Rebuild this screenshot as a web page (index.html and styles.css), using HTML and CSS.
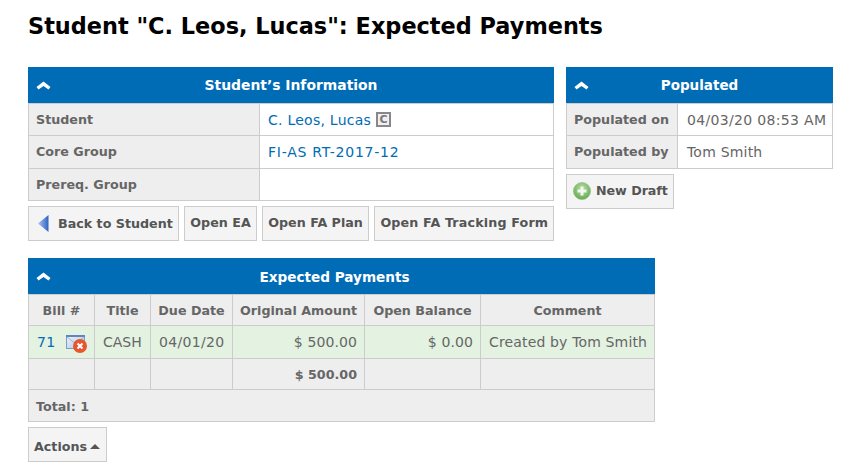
FILE: index.html
```html
<!DOCTYPE html>
<html lang="en">
<head>
<meta charset="utf-8">
<title>Expected Payments</title>
<link rel="stylesheet" href="styles.css">
</head>
<body>
<h1 class="title">Student "C. Leos, Lucas": Expected Payments</h1>
<div class="top">
  <section class="col-left">
    <div class="bar"><svg class="chev" viewBox="0 0 14 9"><path d="M7 .5 14 6l-2 2.5-5-3.600-5 3.600L0 6z"/></svg><span>Student’s Information</span></div>
    <table class="info">
      <tr><th>Student</th><td><div class="student"><a class="name" href="#">C. Leos, Lucas</a><span class="cbadge">C</span></div></td></tr>
      <tr class="mid"><th>Core Group</th><td><a class="code" href="#">FI-AS RT-2017-12</a></td></tr>
      <tr><th>Prereq. Group</th><td></td></tr>
    </table>
    <div class="btns">
      <a class="btn btn-back" href="#"><svg class="ico-back" viewBox="0 0 11 17"><defs><linearGradient id="gb" x1="0" x2="1" y1="0" y2="0"><stop offset="0" stop-color="#a9c6ee"/><stop offset="1" stop-color="#2f62c4"/></linearGradient></defs><path d="M10.500 0v17L0 8.500z" fill="url(#gb)"/></svg>Back to Student</a>
      <a class="btn" href="#">Open EA</a>
      <a class="btn" href="#">Open FA Plan</a>
      <a class="btn btn-wide" href="#">Open FA Tracking Form</a>
    </div>
  </section>
  <section class="col-right">
    <div class="bar bar-small"><svg class="chev" viewBox="0 0 14 9"><path d="M7 .5 14 6l-2 2.5-5-3.600-5 3.600L0 6z"/></svg><span>Populated</span></div>
    <table class="info">
      <tr><th>Populated on</th><td class="plain digits">04/03/20 08:53 AM</td></tr>
      <tr class="mid"><th>Populated by</th><td class="plain person">Tom Smith</td></tr>
    </table>
    <div class="btns">
      <a class="btn btn-new" href="#"><svg class="ico-new" viewBox="0 0 18 18"><defs><radialGradient id="gn" cx=".5" cy=".35" r=".7"><stop offset="0" stop-color="#b6dfa6"/><stop offset="1" stop-color="#5da54c"/></radialGradient></defs><circle cx="9" cy="9" r="8.600" fill="url(#gn)" stroke="#8cc07e" stroke-width=".6"/><path d="M7.500 4.500h3v3h3v3h-3v3h-3v-3h-3v-3h3z" fill="#f2f8ef"/></svg>New Draft</a>
    </div>
  </section>
</div>
<section class="payments">
  <div class="bar bar-offset"><svg class="chev" viewBox="0 0 14 9"><path d="M7 .5 14 6l-2 2.500-5-3.600-5 3.600L0 6z"/></svg><span>Expected Payments</span></div>
  <table class="grid">
    <thead>
      <tr><th class="c1">Bill #</th><th class="c2">Title</th><th class="c3">Due Date</th><th class="c4">Original Amount</th><th class="c5">Open Balance</th><th class="c6">Comment</th></tr>
    </thead>
    <tbody>
      <tr class="row-ok">
        <td><div class="bill"><a class="digits" href="#">71</a><svg class="ico-mail" viewBox="0 0 21 18"><defs><linearGradient id="gm" x1="0" x2="1" y1="0" y2="1"><stop offset="0" stop-color="#eef4fc"/><stop offset="1" stop-color="#a9c3e6"/></linearGradient></defs><rect x=".5" y=".5" width="18" height="13" fill="url(#gm)" stroke="#7f9cc4"/><rect x="0" y="0" width="19" height="2" fill="#5f86b8"/><path d="M1 2l8.500 6.500L18 2" fill="none" stroke="#9db5d8"/><circle cx="14" cy="11" r="7" fill="#e8562e"/><path d="M11.500 8.500l5 5m0-5-5 5" stroke="#fff" stroke-width="2"/></svg></div></td>
        <td>CASH</td><td class="digits">04/01/20</td><td class="num amount">$ 500.00</td><td class="num amount">$ 0.00</td><td class="comment">Created by Tom Smith</td>
      </tr>
      <tr class="row-sum"><td></td><td></td><td></td><th class="num">$ 500.00</th><td></td><td></td></tr>
    </tbody>
    <tfoot>
      <tr><th colspan="6" class="total">Total: 1</th></tr>
    </tfoot>
  </table>
  <div class="btns">
    <a class="btn btn-actions" href="#">Actions<span class="caret"></span></a>
  </div>
</section>
</body>
</html>
```
FILE: styles.css
```css
* { box-sizing: border-box; }
html, body { margin: 0; background: #fff; }
body {
  padding: 12px 16px 0 28px;
  font-family: "DejaVu Sans", Verdana, sans-serif;
  font-size: 12.7px;
  color: #666;
}
a { color: #006cb5; text-decoration: none; }
.title {
  margin: 0 0 26px;
  font-size: 22.4px;
  line-height: 29px;
  font-weight: 700;
  color: #000;
}
.top { display: flex; gap: 12px; align-items: flex-start; }
.col-left { width: 526px; }
.col-right { width: 267px; }
.payments { width: 627px; margin-top: 17px; }
.bar {
  position: relative;
  height: 36px;
  background: #006cb5;
  color: #fff;
  font-weight: 700;
  font-size: 13.9px;
  display: flex;
  align-items: center;
  justify-content: center;
}
.bar-small { font-size: 13.5px; }
.bar-offset { padding: 1px 14px 0 0; font-size: 13.6px; }
.chev { position: absolute; left: 8px; top: 14px; width: 15px; height: 9px; fill: #fff; }
table { border-collapse: collapse; width: 100%; }
.info { table-layout: fixed; }
.info th, .info td { border: 1px solid #ccc; height: 32px; padding: 0 7px; text-align: left; white-space: nowrap; }
.info .mid th, .info .mid td { height: 33px; }
.info .mid th { padding-bottom: 2px; }
.info th { background: #eee; font-weight: 700; }
.col-left .info th { width: 231px; }
.col-right .info th { width: 111px; }
.info td { background: #fff; font-size: 14px; padding-left: 8px; }
.info td.plain { padding-left: 9px; }
.student { display: flex; align-items: center; }
.name { letter-spacing: .25px; }
.code { letter-spacing: .75px; }
.digits { letter-spacing: .33px; }
.amount { letter-spacing: .1px; }
.person { letter-spacing: .2px; }
.comment { letter-spacing: .15px; }
.cbadge {
  width: 15px;
  height: 15px;
  border: 2px solid #888;
  background: #f0f0f0;
  color: #777;
  font-size: 11px;
  line-height: 11px;
  font-weight: 700;
  text-align: center;
  margin-left: 5px;
}
.btns { display: flex; gap: 5.5px; margin-top: 5px; }
.btn {
  display: flex;
  align-items: center;
  height: 35px;
  padding: 0 5px 2px;
  background: #f4f4f4;
  border: 1px solid #ccc;
  color: #555;
  font-weight: 700;
  white-space: nowrap;
}
.btn-back { padding-left: 9px; padding-bottom: 0; }
.btn-wide { letter-spacing: .15px; padding: 0 4.5px 2px 5px; }
.btn-actions { padding: 3px 5px 0; width: 79px; }
.btn-new { padding-left: 6px; letter-spacing: -.05px; }
.ico-back { width: 11px; height: 17px; margin-right: 9px; }
.ico-new { width: 18px; height: 18px; margin-right: 5px; }
.caret {
  width: 0; height: 0;
  margin-left: 3px;
  border: 5px solid transparent;
  border-top: 0;
  border-bottom-color: #555;
}
.grid { table-layout: fixed; }
.grid th, .grid td { border: 1px solid #ccc; padding: 0 7px; white-space: nowrap; }
.grid thead th { height: 31px; background: #eee; text-align: center; }
.grid tbody td { font-size: 14px; }
.grid .row-ok td { height: 33px; background: #e3f2e1; padding-left: 8px; }
.row-sum td, .row-sum th { height: 31px; background: #eee; }
.grid .num { text-align: right; }
.grid .total { height: 32px; padding-top: 1px; background: #eee; text-align: left; }
.c1 { width: 66px; }
.c2 { width: 56px; }
.c3 { width: 82px; }
.c4 { width: 132px; }
.c5 { width: 116px; }
.bill { display: flex; align-items: center; justify-content: space-between; padding-right: 0; }
.ico-mail { width: 21px; height: 18px; margin-top: 3px; }
```
